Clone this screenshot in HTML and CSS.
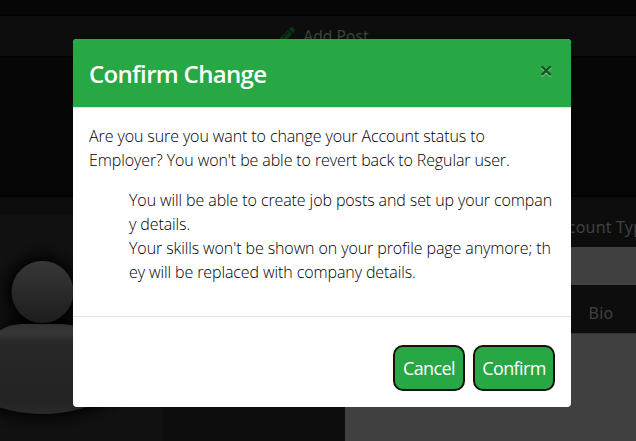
FILE: index.html
```html
<!DOCTYPE html>
<html lang="en">
<head>
<meta charset="utf-8">
<title>Confirm Change</title>
<link rel="stylesheet" href="styles.css">
</head>
<body>
<div class="page">
  <div class="topbar"></div>
  <nav class="nav">
    <svg class="pencil" width="16" height="16" viewBox="0 0 512 512"><path fill="#0b3315" d="M498 142l-47 47c-5 5-12 5-17 0L323 78c-5-5-5-12 0-17l47-47c19-19 49-19 68 0l60 60c19 19 19 49 0 68zM283 101L22 362 .3 484c-3 16 12 30 28 28l122-21 261-262c5-5 5-12 0-17L300 101c-5-5-12-5-17 0zM124 340c-5-6-5-14 0-20l154-154c6-5 14-5 20 0s5 14 0 20L144 340c-6 5-14 5-20 0z"/></svg>
    <span>Add Post</span>
  </nav>
  <div class="hero"></div>
  <main class="profile">
    <div class="avatar">
      <svg width="163" height="226" viewBox="0 0 163 226">
        <defs>
          <linearGradient id="head" x1="0" y1="0" x2="0" y2="1"><stop offset="0" stop-color="#373737"/><stop offset="1" stop-color="#1d1d1d"/></linearGradient>
          <linearGradient id="body" x1="0" y1="0" x2="0" y2="1"><stop offset="0" stop-color="#303030"/><stop offset=".1" stop-color="#373737"/><stop offset=".2" stop-color="#282828"/><stop offset=".85" stop-color="#232323"/><stop offset="1" stop-color="#2a2a2a"/></linearGradient>
          <filter id="soft" x="-40%" y="-40%" width="180%" height="180%"><feGaussianBlur stdDeviation="8"/></filter>
        </defs>
        <g filter="url(#soft)" fill="#000"><circle cx="42" cy="77" r="36"/><path d="M-30 155Q-5 106 22 106H62Q92 106 116 155V184Q82 202 42 202T-30 184Z"/></g>
        <circle cx="42.500" cy="77" r="31" fill="url(#head)"/>
        <path d="M-30 150Q-8 109 22 109H62Q92 109 116 150V178Q82 199 42 199T-30 178Z" fill="url(#body)"/>
      </svg>
    </div>
    <div class="details">
      <label class="label account">Account Type</label>
      <div class="field"></div>
      <label class="label bio">Bio</label>
      <div class="area"></div>
    </div>
  </main>
</div>
<div class="modal" role="dialog">
  <header class="modal-header">
    <h5 class="title">Confirm Change</h5>
    <button class="close" aria-label="Close">×</button>
  </header>
  <div class="modal-body">
    <p class="question">Are you sure you want to change your Account status to<br>Employer? You won't be able to revert back to Regular user.</p>
    <ul class="notes">
      <li>You will be able to create job posts and set up your compan<br>y details.</li>
      <li>Your skills won't be shown on your profile page anymore; th<br>ey will be replaced with company details.</li>
    </ul>
  </div>
  <footer class="modal-footer">
    <button class="btn cancel">Cancel</button>
    <button class="btn confirm">Confirm</button>
  </footer>
</div>
</body>
</html>
```

FILE: styles.css
```css
* { box-sizing: border-box; }
body { margin: 0; width: 636px; height: 441px; overflow: hidden; background: #060606; font-family: "Open Sans", "Noto Sans", sans-serif; font-size: 16px; line-height: 24px; }
.page { display: flex; flex-direction: column; width: 636px; height: 441px; overflow: hidden; color: #404040; }
.topbar { height: 16px; border-bottom: 2px solid #010101; }
.nav { display: flex; justify-content: center; gap: 8px; height: 42px; padding: 8px 0 0 12px; background: #0d0d0d; border-bottom: 2px solid #020202; font-family: "Noto Sans", sans-serif; font-size: 15.5px; letter-spacing: .1px; }
.pencil { margin-top: 3px; }
.hero { height: 139px; border-bottom: 2px solid #010101; }
.profile { display: flex; height: 244px; background: #0d0d0d; }
.avatar { flex: none; width: 163px; height: 226px; margin-top: 18px; background: #111; overflow: hidden; }
.avatar svg { display: block; }
.details { display: flex; flex-direction: column; width: 291px; margin-left: 182px; flex: none; overflow: hidden; font-family: "Noto Sans", sans-serif; letter-spacing: .2px; }
.label { display: block; width: 512px; text-align: center; }
.account { height: 50px; padding-top: 18px; }
.field { height: 38px; background: #404040; }
.bio { height: 48px; padding-top: 16px; }
.area { height: 108px; background: #404040; border-top: 1px solid #333; }
.modal { position: absolute; left: 73px; top: 39px; width: 498px; height: 368px; background: #fff; border-radius: 4px; color: #000; overflow: hidden; }
.modal-header { display: flex; justify-content: space-between; height: 69px; padding: 16px; background: #28a745; border-bottom: 1px solid #dee2e6; color: #fff; }
.title { margin: 0; font-size: 24px; font-weight: 600; line-height: 38px; letter-spacing: -.67px; }
.close { width: 18px; height: 29px; padding: 0; border: 0; background: none; font: 600 24px/29px "Noto Sans", sans-serif; color: #145423; text-shadow: 0 1px 0 #94d3a2; }
.modal-body { height: 208px; padding: 16px; font-weight: 300; letter-spacing: -.1px; white-space: nowrap; }
.question { margin: 0 0 16px; }
.notes { margin: 0; padding-left: 40px; list-style: none; }
.modal-footer { display: flex; justify-content: flex-end; gap: 8px; height: 91px; padding: 28px 16px 0; border-top: 1px solid #dee2e6; }
.btn { height: 46px; padding: 0; border: 2px solid #111; border-radius: 10px; background: #28a745; color: #fff; font: 18px/40px "Open Sans", sans-serif; letter-spacing: -.6px; }
.cancel { width: 72px; }
.confirm { width: 82px; }
```
